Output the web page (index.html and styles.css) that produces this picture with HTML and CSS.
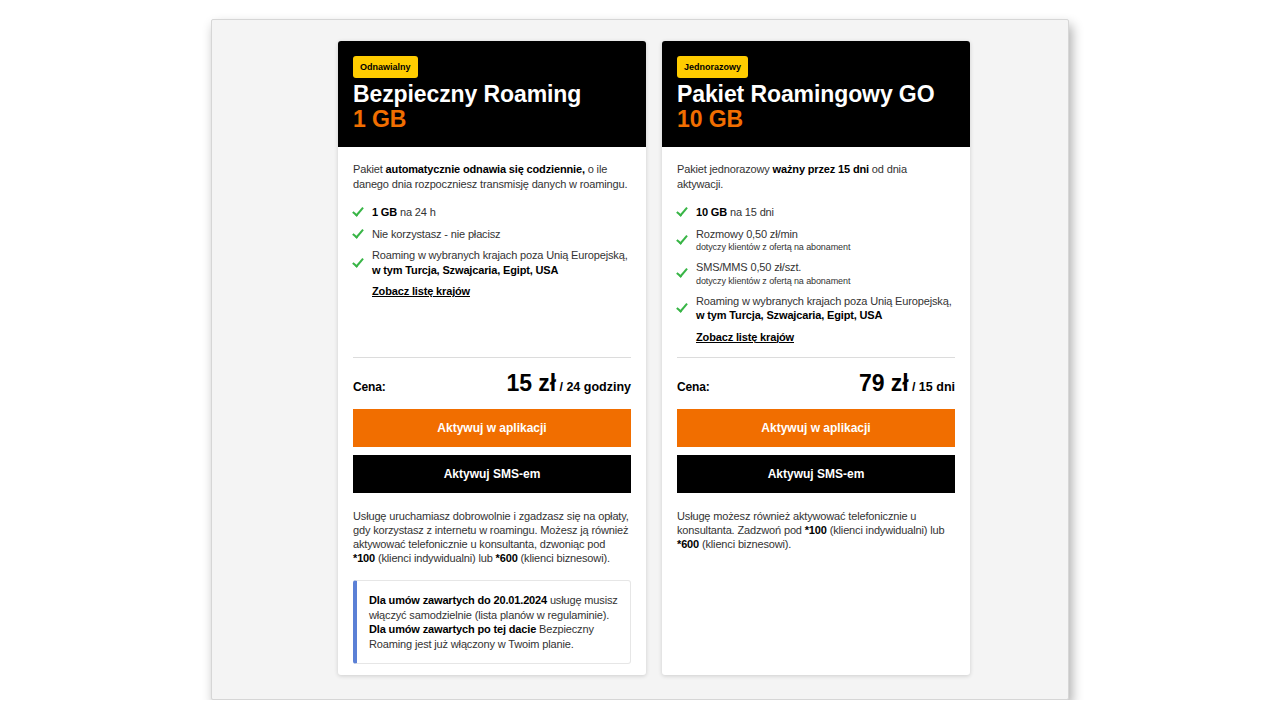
FILE: index.html
```html
<!DOCTYPE html>
<html lang="pl">
  <head>
    <meta charset="UTF-8" />
    <meta name="viewport" content="width=device-width, initial-scale=1.0" />
    <title>Pakiety roamingowe</title>
    <link rel="stylesheet" href="styles.css">
  </head>
  <body>
    <div class="frame">
      <section class="offer">
        <header class="offer-head">
          <span class="badge">Odnawialny</span>
          <h2>Bezpieczny Roaming <span class="volume">1 GB</span></h2>
        </header>
        <div class="offer-body">
          <div class="details">
            <p class="intro">
              Pakiet <b>automatycznie odnawia się codziennie,</b> o ile
              danego dnia rozpoczniesz transmisję danych w roamingu.
            </p>
            <ul class="perks">
              <li><b>1 GB</b> na 24 h</li>
              <li>Nie korzystasz - nie płacisz</li>
              <li>
                Roaming w wybranych krajach poza Unią Europejską,
                <b>w tym Turcja, Szwajcaria, Egipt, USA</b>
              </li>
            </ul>
            <a href="#" class="countries">Zobacz listę krajów</a>
          </div>
          <div class="price-row">
            <span class="price-label">Cena:</span>
            <span class="price"><strong>15 zł</strong> / 24 godziny</span>
          </div>
          <a href="#" class="btn btn-orange">Aktywuj w aplikacji</a>
          <a href="#" class="btn btn-black">Aktywuj SMS-em</a>
          <p class="note">
            Usługę uruchamiasz dobrowolnie i zgadzasz się na opłaty,
            gdy korzystasz z internetu w roamingu. Możesz ją również
            aktywować telefonicznie u konsultanta, dzwoniąc pod
            <b>*100</b> (klienci indywidualni) lub <b>*600</b> (klienci biznesowi).
          </p>
          <div class="info">
            <b>Dla umów zawartych do 20.01.2024</b> usługę musisz
            włączyć samodzielnie (lista planów w regulaminie).
            <b>Dla umów zawartych po tej dacie</b> Bezpieczny
            Roaming jest już włączony w Twoim planie.
          </div>
        </div>
      </section>

      <section class="offer">
        <header class="offer-head">
          <span class="badge">Jednorazowy</span>
          <h2>Pakiet Roamingowy GO <span class="volume">10 GB</span></h2>
        </header>
        <div class="offer-body">
          <div class="details">
            <p class="intro">
              Pakiet jednorazowy <b>ważny przez 15 dni</b> od dnia
              aktywacji.
            </p>
            <ul class="perks">
              <li><b>10 GB</b> na 15 dni</li>
              <li>
                Rozmowy 0,50 zł/min
                <small>dotyczy klientów z ofertą na abonament</small>
              </li>
              <li>
                SMS/MMS 0,50 zł/szt.
                <small>dotyczy klientów z ofertą na abonament</small>
              </li>
              <li>
                Roaming w wybranych krajach poza Unią Europejską,
                <b>w tym Turcja, Szwajcaria, Egipt, USA</b>
              </li>
            </ul>
            <a href="#" class="countries">Zobacz listę krajów</a>
          </div>
          <div class="price-row">
            <span class="price-label">Cena:</span>
            <span class="price"><strong>79 zł</strong> / 15 dni</span>
          </div>
          <a href="#" class="btn btn-orange">Aktywuj w aplikacji</a>
          <a href="#" class="btn btn-black">Aktywuj SMS-em</a>
          <p class="note">
            Usługę możesz również aktywować telefonicznie u
            konsultanta. Zadzwoń pod <b>*100</b> (klienci indywidualni) lub
            <b>*600</b> (klienci biznesowi).
          </p>
        </div>
      </section>
    </div>
  </body>
</html>
```

FILE: styles.css
```css
html {
  font-family: "Liberation Sans", Arial, Helvetica, sans-serif;
  font-size: 11px;
  line-height: 1.35;
  letter-spacing: -0.15px;
  color: #333;
}
body {
  margin: 0;
  background: #fff;
}
b,
strong {
  color: #000;
}
.frame {
  width: 858px;
  height: 681px;
  box-sizing: border-box;
  margin: 19px auto 0;
  padding: 21px 0 24px 126px;
  display: flex;
  gap: 16px;
  align-items: stretch;
  background: #f4f4f4;
  border: 1px solid #d6d6d6;
  border-radius: 2px;
  box-shadow: 3px 6px 12px rgba(0, 0, 0, 0.32);
}

/*****************************************
    OFFER CARD
*****************************************/
.offer {
  width: 308px;
  display: flex;
  flex-direction: column;
  background: #fff;
  border-radius: 3px;
  box-shadow: 0 1px 4px rgba(0, 0, 0, 0.16);
  overflow: hidden;
}
.offer-head {
  background: #000;
  color: #fff;
  padding: 15px;
}
.badge {
  display: inline-block;
  background: #ffcc00;
  color: #000;
  font-size: 9px;
  font-weight: bold;
  line-height: 22px;
  letter-spacing: 0;
  padding: 0 7px;
  border-radius: 3px;
}
.offer-head h2 {
  margin: 4px 0 0;
  font-size: 23px;
  line-height: 25px;
  letter-spacing: -0.1px;
  font-weight: bold;
}
.volume {
  display: block;
  color: #f16e00;
}
.offer-body {
  flex: 1;
  padding: 15px;
}
.details {
  min-height: 195px;
  border-bottom: 1px solid #dcdcdc;
}
.intro {
  margin: 0 0 13px;
  line-height: 15px;
}
.perks {
  list-style: none;
  margin: 0;
  padding: 0;
}
.perks li {
  position: relative;
  padding-left: 19px;
  margin-bottom: 7px;
  line-height: 14.5px;
}
.perks li::before {
  content: "";
  position: absolute;
  left: 2px;
  top: 50%;
  width: 4px;
  height: 9px;
  margin-top: -7px;
  border: solid #38b546;
  border-width: 0 2.5px 2.5px 0;
  transform: rotate(40deg);
}
.perks small {
  display: block;
  font-size: 9px;
  line-height: 12px;
  letter-spacing: -0.1px;
}
.countries {
  display: inline-block;
  margin: 0 0 11px 19px;
  color: #000;
  font-weight: bold;
  text-decoration: underline;
  line-height: 15px;
}

/* price and call to action */
.price-row {
  display: flex;
  justify-content: space-between;
  align-items: baseline;
  height: 26px;
  padding-top: 12px;
  line-height: 26px;
  font-size: 12px;
  font-weight: bold;
  color: #000;
}
.price {
  font-size: 12.5px;
  letter-spacing: 0;
}
.price strong {
  font-size: 23px;
  letter-spacing: -0.1px;
}
.btn {
  display: block;
  height: 38px;
  line-height: 38px;
  text-align: center;
  font-size: 12px;
  font-weight: bold;
  letter-spacing: 0;
  color: #fff;
  text-decoration: none;
}
.btn-orange {
  background: #f16e00;
  margin-top: 13px;
}
.btn-black {
  background: #000;
  margin-top: 8px;
}
.note {
  margin: 16px 0 0;
  padding-right: 2px;
  line-height: 14px;
}
.info {
  margin-top: 15px;
  padding: 12px 10px 12px 12px;
  line-height: 14.5px;
  border: 1px solid #e6e6e6;
  border-left: 4px solid #5b80d6;
  border-radius: 3px;
}
```
